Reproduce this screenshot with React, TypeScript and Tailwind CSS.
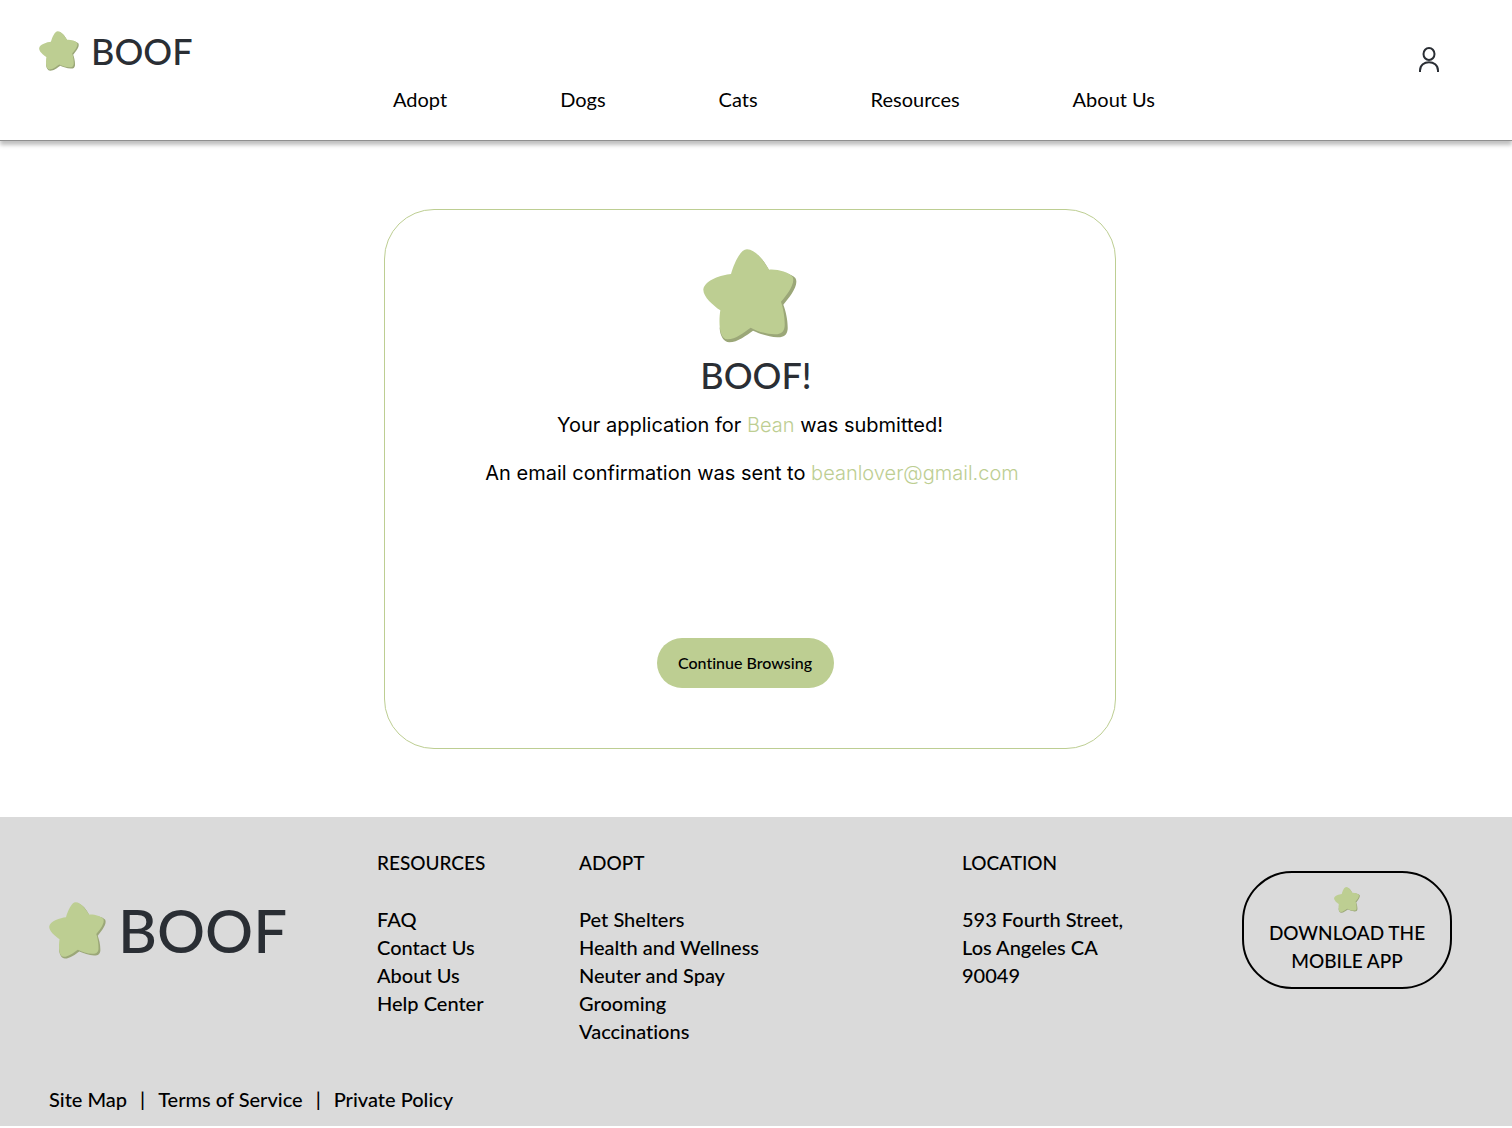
const navLinks = ['Adopt', 'Dogs', 'Cats', 'Resources', 'About Us'];

const resourceLinks = ['FAQ', 'Contact Us', 'About Us', 'Help Center'];

const adoptLinks = ['Pet Shelters', 'Health and Wellness', 'Neuter and Spay', 'Grooming', 'Vaccinations'];

const legalLinks = ['Site Map', 'Terms of Service', 'Private Policy'];

function Star({ className }: { className: string }) {
  return (
    <svg className={className} viewBox="68 41 282 282" aria-hidden="true">
      <path
        fill="#9ba778"
        d="M160 117 C174 86 188 49 208 49 C232 49 257 83 268 109 C298 108 333 113 345 128 C358 148 327 187 309 208 C316 226 323 255 322 282 C320 301 308 307 291 306 C265 304 238 295 218 286 C199 299 172 321 147 321 C130 321 119 300 118 279 Z"
      />
      <path
        fill="#bdce92"
        d="M152 116 C162 82 180 42 200 42 C226 42 251 78 266 103 C292 101 324 110 337 125 C346 144 320 179 302 199 C309 219 314 249 313 273 C311 292 299 298 283 297 C257 296 231 288 211 277 C191 291 166 312 142 312 C115 313 115 258 120 225 C98 210 68 184 69 162 C74 133 124 119 152 116 Z"
      />
    </svg>
  );
}

function Header() {
  return (
    <header className="flex flex-col h-[141px] border-b border-[#8f8f8f] bg-white shadow-[0_4px_4px_rgba(0,0,0,0.25)]">
      <div className="flex items-start justify-between pl-[39px] pr-[72px] pt-[29px]">
        <a href="#" className="flex items-center gap-3 text-4xl/11 font-medium text-[#2a2e34]">
          <Star className="size-10" />
          BOOF
        </a>
        <button type="button" aria-label="Account" className="mt-[18px]">
          <svg className="w-[22px] h-[27px]" viewBox="0 0 22 27" fill="none" stroke="#2a2e34" strokeWidth="2">
            <ellipse cx="11" cy="7" rx="5.5" ry="6" />
            <path d="M2 25 V23.500 C2 12.500 20 12.500 20 23.500 V25" />
          </svg>
        </button>
      </div>
      <nav className="flex justify-center gap-[113px] pl-9 mt-[11px] text-xl">
        {navLinks.map((link) => (
          <a key={link} href="#">{link}</a>
        ))}
      </nav>
    </header>
  );
}

function Confirmation() {
  return (
    <main className="flex justify-center py-[68px] pr-3">
      <section className="flex flex-col items-center w-[732px] h-[540px] pt-[39px] rounded-[50px] border border-[#bdce92]">
        <Star className="size-[94px]" />
        <h1 className="mt-2 pl-3 text-4xl/12 font-medium text-[#2a2e34]">BOOF!</h1>
        <div className="mt-3 font-[Inter,sans-serif] text-xl text-center">
          <p>
            Your application for <span className="font-light text-[#bdce92]">Bean</span> was submitted!
          </p>
          <p className="mt-5 pl-1">
            An email confirmation was sent to <span className="font-light text-[#bdce92]">beanlover@gmail.com</span>
          </p>
        </div>
        <button type="button" className="mt-[151px] mr-2.5 h-[50px] w-[177px] rounded-full bg-[#bdce92] text-base font-medium">
          Continue Browsing
        </button>
      </section>
    </main>
  );
}

function FooterColumn({ title, links }: { title: string; links: string[] }) {
  return (
    <div>
      <h2 className="text-[19px] leading-7">{title}</h2>
      <ul className="mt-7">
        {links.map((link) => (
          <li key={link}>
            <a href="#">{link}</a>
          </li>
        ))}
      </ul>
    </div>
  );
}

function Footer() {
  return (
    <footer className="bg-[#dadada] pl-[49px] pr-[60px] pt-8 pb-[13px] text-xl font-medium">
      <div className="grid grid-cols-[328fr_202fr_383fr_280fr_210px] whitespace-nowrap">
        <a href="#" className="flex items-center gap-3 self-start mt-[47px] text-6xl/17 text-[#2a2e34]">
          <Star className="size-[57px]" />
          BOOF
        </a>
        <FooterColumn title="RESOURCES" links={resourceLinks} />
        <FooterColumn title="ADOPT" links={adoptLinks} />
        <div>
          <h2 className="text-[19px] leading-7">LOCATION</h2>
          <address className="mt-7 not-italic">
            593 Fourth Street,
            <br />
            Los Angeles CA
            <br />
            90049
          </address>
        </div>
        <button type="button" className="flex flex-col items-center self-start mt-[22px] h-[118px] pt-3.5 rounded-[50px] border-2 border-black">
          <Star className="size-[26px]" />
          <span className="mt-1.5 text-[19px] leading-7">
            DOWNLOAD THE
            <br />
            MOBILE APP
          </span>
        </button>
      </div>
      <div className="flex mt-10">
        {legalLinks.map((link, i) => (
          <span key={link}>
            {i > 0 && <span className="mx-[13px]">|</span>}
            <a href="#">{link}</a>
          </span>
        ))}
      </div>
    </footer>
  );
}

export default function App() {
  return (
    <div className="min-h-screen bg-white font-[Lato,sans-serif] text-black [font-variant-ligatures:none]">
      <Header />
      <Confirmation />
      <Footer />
    </div>
  );
}
